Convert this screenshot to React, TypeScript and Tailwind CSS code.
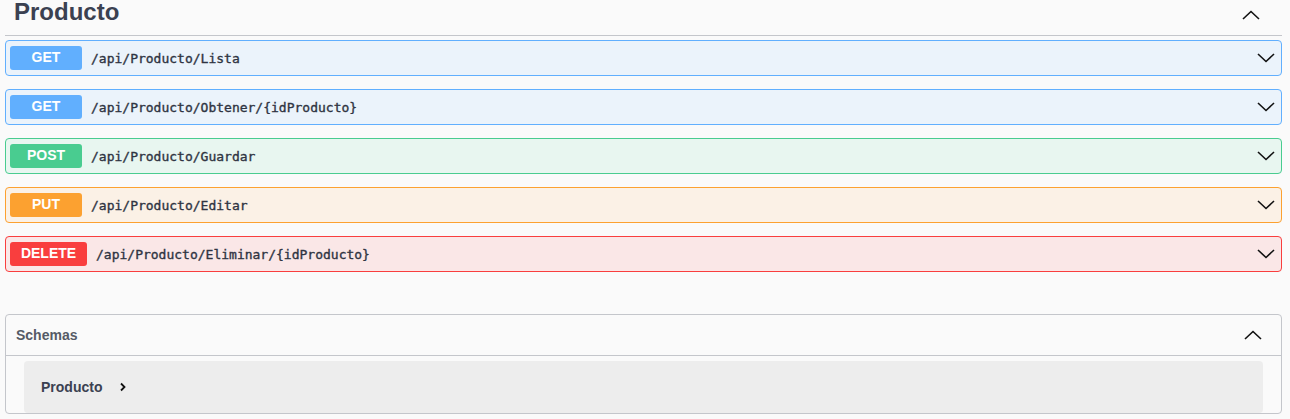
import { type ReactNode } from 'react';

type Op = {
  method: string;
  path: string;
  badge: string;
  border: string;
  bg: string;
  badgeWidth: string;
};

const ops: Op[] = [
  { method: 'GET', path: '/api/Producto/Lista', badge: 'bg-[#61affe]', border: 'border-[#61affe]', bg: 'bg-[#ebf3fb]', badgeWidth: 'w-[72px]' },
  { method: 'GET', path: '/api/Producto/Obtener/{idProducto}', badge: 'bg-[#61affe]', border: 'border-[#61affe]', bg: 'bg-[#ebf3fb]', badgeWidth: 'w-[72px]' },
  { method: 'POST', path: '/api/Producto/Guardar', badge: 'bg-[#49cc90]', border: 'border-[#49cc90]', bg: 'bg-[#e8f6f0]', badgeWidth: 'w-[72px]' },
  { method: 'PUT', path: '/api/Producto/Editar', badge: 'bg-[#fca130]', border: 'border-[#fca130]', bg: 'bg-[#fbf1e6]', badgeWidth: 'w-[72px]' },
  { method: 'DELETE', path: '/api/Producto/Eliminar/{idProducto}', badge: 'bg-[#f93e3e]', border: 'border-[#f93e3e]', bg: 'bg-[#fae7e7]', badgeWidth: 'w-[77px]' },
];

function Chevron({ up = false, className = '' }: { up?: boolean; className?: string }) {
  return (
    <svg width="18" height="10" viewBox="0 0 18 10" className={className} fill="none">
      <path
        d={up ? 'M1 9 L9 1.5 L17 9' : 'M1 1 L9 8.5 L17 1'}
        stroke="#111"
        strokeWidth="1.6"
        strokeLinejoin="miter"
      />
    </svg>
  );
}

function OpBlock({ op }: { op: Op }) {
  return (
    <div className={`flex h-[36px] items-center rounded-[4px] border ${op.border} ${op.bg} pl-[4px] pr-[6px]`}>
      <span
        className={`${op.badgeWidth} flex h-[24px] shrink-0 items-center justify-center rounded-[3px] pb-[2px] ${op.badge} text-[14px] font-bold text-white`}
        style={{ fontFamily: '"Liberation Sans", Arial, sans-serif' }}
      >
        {op.method}
      </span>
      {/* DejaVu Sans Mono has no semibold; a hairline stroke thickens it a little */}
      <span
        className="ml-[9px] pt-[1px] text-[13px] text-[#2f3442] [-webkit-text-stroke:0.35px_#2f3442]"
        style={{ fontFamily: '"DejaVu Sans Mono", monospace' }}
      >
        {op.path}
      </span>
      <Chevron className="ml-auto" />
    </div>
  );
}

function Section({ children }: { children: ReactNode }) {
  return <div className="flex flex-col gap-[13px]">{children}</div>;
}

export default function App() {
  return (
    <div
      className="h-[419px] w-[1290px] overflow-hidden bg-[#fafafa] text-[#3b4151]"
      style={{ fontFamily: '"Liberation Sans", Arial, sans-serif' }}
    >
      <div className="px-[5px] pr-[8px]">
        <div className="flex h-[36px] items-center border-b border-[#c4c6cb] pb-[12px] pl-[9px] pr-[22px]">
          <h2 className="text-[24px] font-bold leading-none text-[#3b4151]">Producto</h2>
          <Chevron up className="ml-auto mt-[6px]" />
        </div>
        <div className="pt-[4px]">
          <Section>
            {ops.map((op, i) => (
              <OpBlock key={i} op={op} />
            ))}
          </Section>
        </div>

        <div className="mt-[42px] rounded-[4px] border border-[#c4c6cb]">
          <div className="flex h-[41px] items-center border-b border-[#c4c6cb] pl-[10px] pr-[19px]">
            <span className="text-[14px] font-bold text-[#555a66]">Schemas</span>
            <Chevron up className="ml-auto" />
          </div>
          <div className="px-[18px] pt-[5px]">
            <div className="flex h-[52px] items-center rounded-[4px] bg-[#ededed] pl-[17px]">
              <span className="text-[14px] font-bold text-[#3b4151]">Producto</span>
              <svg width="10" height="10" viewBox="0 0 10 10" className="ml-[16px]" fill="none">
                <path d="M3 1.5 L6.5 5 L3 8.5" stroke="#111" strokeWidth="1.8" />
              </svg>
            </div>
          </div>
        </div>
      </div>
    </div>
  );
}
